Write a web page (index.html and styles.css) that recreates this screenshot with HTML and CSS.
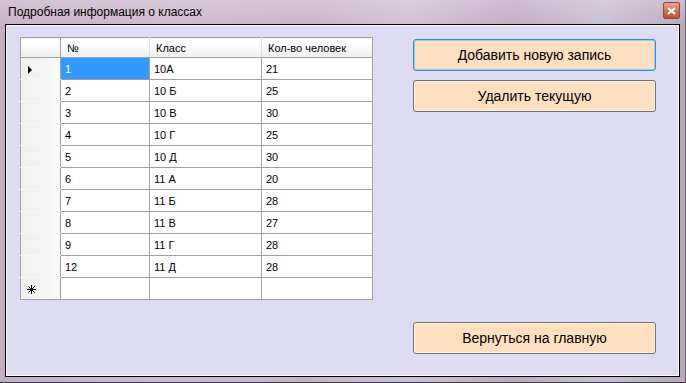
FILE: index.html
```html
<!DOCTYPE html>
<html>
<head>
    <title>Подробная информация о классах</title>
    <link rel="stylesheet" href="styles.css">
</head>
<body>
    <div class="window">
        <div class="titlebar">
            <span class="title">Подробная информация о классах</span>
            <span class="close">
                <svg width="9" height="8" viewBox="0 0 9 8">
                    <path d="M1 1 L8 7 M8 1 L1 7" stroke="#fff" stroke-width="2"/>
                </svg>
            </span>
        </div>

        <div class="client">
            <table class="grid">
                <thead>
                    <tr>
                        <th class="corner"></th>
                        <th class="c1">№</th>
                        <th class="c2">Класс</th>
                        <th class="c3">Кол-во человек</th>
                    </tr>
                </thead>
                <tbody>
                    <tr>
                        <td class="rh"><span class="arrow"></span></td>
                        <td class="selected">1</td>
                        <td>10А</td>
                        <td>21</td>
                    </tr>
                    <tr><td class="rh"></td><td>2</td><td>10 Б</td><td>25</td></tr>
                    <tr><td class="rh"></td><td>3</td><td>10 В</td><td>30</td></tr>
                    <tr><td class="rh"></td><td>4</td><td>10 Г</td><td>25</td></tr>
                    <tr><td class="rh"></td><td>5</td><td>10 Д</td><td>30</td></tr>
                    <tr><td class="rh"></td><td>6</td><td>11 А</td><td>20</td></tr>
                    <tr><td class="rh"></td><td>7</td><td>11 Б</td><td>28</td></tr>
                    <tr><td class="rh"></td><td>8</td><td>11 В</td><td>27</td></tr>
                    <tr><td class="rh"></td><td>9</td><td>11 Г</td><td>28</td></tr>
                    <tr><td class="rh"></td><td>12</td><td>11 Д</td><td>28</td></tr>
                    <tr>
                        <td class="rh">
                            <svg class="star" width="9" height="9" viewBox="0 0 9 9">
                                <path d="M4.5 0 V9 M0 4.5 H9 M1.3 1.3 L7.7 7.7 M7.7 1.3 L1.3 7.7" stroke="#000" stroke-width="1"/>
                            </svg>
                        </td>
                        <td></td><td></td><td></td>
                    </tr>
                </tbody>
            </table>

            <div class="actions">
                <button class="btn focused">Добавить новую запись</button>
                <button class="btn">Удалить текущую</button>
                <button class="btn back">Вернуться на главную</button>
            </div>
        </div>
    </div>
</body>
</html>
```

FILE: styles.css
```css
body {
    margin: 0;
    font-family: "Liberation Sans", Arial, sans-serif;
    background: #3a3440;
}
.window {
    width: 686px;
    height: 383px;
    box-sizing: border-box;
    display: flex;
    flex-direction: column;
    background: linear-gradient(90deg, #c4b0c4 0%, #cdb8cc 25%, #c7b2c9 45%, #d0bfd2 60%, #bfa9c3 75%, #cbbdd0 88%, #b8a6bc 100%);
    border-right: 1px solid #6e6275;
    border-bottom: 1px solid #3d3543;
}
.titlebar {
    height: 24px;
    display: flex;
    align-items: center;
    justify-content: space-between;
    padding: 0 5px 0 8px;
    background: linear-gradient(180deg, rgba(255,255,255,0.25), rgba(255,255,255,0.05));
}
.title {
    font-size: 12px;
    color: #000;
    margin-top: -1px;
}
.close {
    width: 15px;
    height: 15px;
    margin-top: -3px;
    display: flex;
    align-items: center;
    justify-content: center;
    border: 1px solid #8a4a44;
    border-radius: 2px;
    background: linear-gradient(180deg, #e6a48e 0%, #d4705a 50%, #c05038 100%);
}
.client {
    flex: 1;
    margin: 0 5px 5px 5px;
    border: 1px solid #000;
    box-shadow: inset 0 0 0 1px #fff;
    background: #dedcf2;
    display: flex;
    padding: 12px 23px 22px 14px;
}
.grid {
    border-collapse: collapse;
    font-size: 11px;
    align-self: flex-start;
    background: #fff;
}
.grid th {
    height: 19px;
    padding: 0 0 0 6px;
    text-align: left;
    font-weight: normal;
    color: #000;
    background: linear-gradient(180deg, #ffffff 0%, #f7f7f7 60%, #efefef 100%);
    border-top: 1px solid #a0a0a0;
    border-right: 1px solid #e2e2e2;
    border-bottom: 1px solid #a0a0a0;
}
.grid th.corner {
    width: 39px;
    padding: 0;
    border-left: 1px solid #a0a0a0;
    border-right: 1px solid #a0a0a0;
}
.grid th.c1 { width: 82px; }
.grid th.c2 { width: 105px; }
.grid th.c3 { width: 104px; border-right: 1px solid #a0a0a0; }
.grid td {
    height: 21px;
    padding: 0 0 0 4px;
    border: 1px solid #a0a0a0;
    color: #000;
}
.grid td.rh {
    padding: 0;
    position: relative;
    border-left: 1px solid #a0a0a0;
    border-top: 1px solid #f8f8f8;
    border-bottom: 1px solid #f8f8f8;
    background: linear-gradient(90deg, #f0f0f0 0%, #f6f6f6 70%, #fbfbfb 100%);
}
.grid tr:last-child td.rh { border-bottom: 1px solid #a0a0a0; }
.grid td.selected {
    background: #3399ff;
    color: #fff;
}
.arrow {
    position: absolute;
    left: 7px;
    top: 8px;
    border-left: 4px solid #000;
    border-top: 4px solid transparent;
    border-bottom: 4px solid transparent;
}
.star {
    position: absolute;
    left: 6px;
    top: 7px;
}
.actions {
    margin-left: auto;
    margin-top: 2px;
    display: flex;
    flex-direction: column;
    gap: 9px;
}
.btn {
    width: 243px;
    height: 32px;
    font-family: "Liberation Sans", Arial, sans-serif;
    font-size: 14px;
    color: #000;
    background: #fedfc0;
    border: 1px solid #707070;
    border-radius: 3px;
    box-shadow: inset 0 0 0 1px #fff3e6;
    padding: 0;
}
.btn.focused {
    border-color: #3c8fc7;
    box-shadow: inset 0 0 0 1px #8cd0f0;
}
.btn.back {
    margin-top: auto;
}
```
